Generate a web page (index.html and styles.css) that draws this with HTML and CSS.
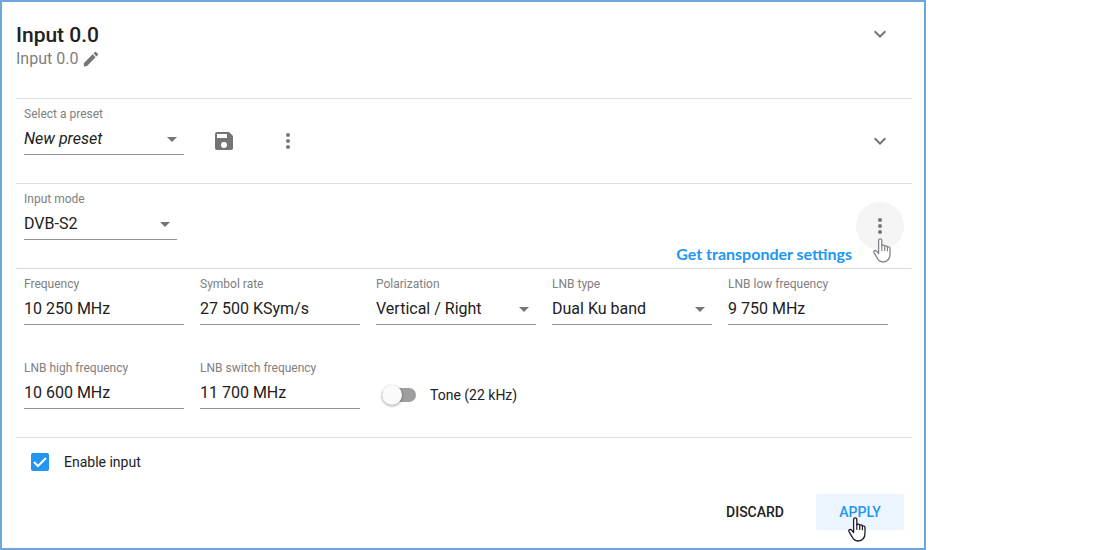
FILE: index.html
```html
<!DOCTYPE html>
<html lang="en">
<head>
    <meta charset="UTF-8">
    <title>Input 0.0</title>
    <link rel="stylesheet" href="styles.css">
</head>
<body>
<!-- shared icons -->
<svg class="sprite" aria-hidden="true">
    <symbol id="chevron" viewBox="0 0 24 24"><path d="M7.41 8.59 12 13.17l4.59-4.58L18 10l-6 6-6-6z"/></symbol>
    <symbol id="more" viewBox="0 0 24 24"><path d="M12 8a2 2 0 1 0 0-4 2 2 0 0 0 0 4zm0 2a2 2 0 1 0 0 4 2 2 0 0 0 0-4zm0 6a2 2 0 1 0 0 4 2 2 0 0 0 0-4z"/></symbol>
    <symbol id="hand" viewBox="0 0 18 25">
        <path fill="#fff" stroke="currentColor" stroke-width="1.3" stroke-linejoin="round" stroke-linecap="round" d="M5.6 15.500V2.600c0-2.400 3.200-2.400 3.200 0v5.200c.6-1 2.600-.8 2.900.5.700-.8 2.400-.5 2.700.7.900-.5 2.600 0 2.600 1.600v5.200c0 4.800-2.400 8.200-7 8.200-3.400 0-4.700-1.600-5.900-4.200L1 14.600c-.7-1.800 1.200-2.800 2.600-1.500l2 2.400"/>
        <path fill="none" stroke="currentColor" stroke-width="1.200" stroke-linecap="round" d="M8.800 7.500v5M11.700 8.300v4.200M14.400 9v3.800"/>
    </symbol>
</svg>

<form class="panel">
    <header class="head">
        <div class="titles">
            <h1>Input 0.0</h1>
            <div class="sub">
                <span>Input 0.0</span>
                <button type="button" class="edit" aria-label="Rename">
                    <svg viewBox="2 2 20 20"><path d="M3 17.250V21h3.750L17.810 9.940l-3.750-3.750L3 17.250zM20.710 7.040a1 1 0 0 0 0-1.410l-2.340-2.340a1 1 0 0 0-1.410 0l-1.830 1.830 3.750 3.750 1.830-1.830z"/></svg>
                </button>
            </div>
        </div>
        <button type="button" class="icon-btn right" aria-label="Collapse"><svg><use href="#chevron"/></svg></button>
    </header>

    <section class="row">
        <div class="field preset">
            <label for="preset">Select a preset</label>
            <div class="select"><select id="preset"><option>New preset</option></select></div>
        </div>
        <button type="button" class="icon-btn" aria-label="Save preset">
            <svg viewBox="0 0 24 24"><path d="M17 3H5a2 2 0 0 0-2 2v14a2 2 0 0 0 2 2h14c1.100 0 2-.9 2-2V7l-4-4zm-5 16a3 3 0 1 1 0-6 3 3 0 0 1 0 6zm3-10H5V5h10v4z"/></svg>
        </button>
        <button type="button" class="icon-btn" aria-label="Preset menu"><svg><use href="#more"/></svg></button>
        <button type="button" class="icon-btn right" aria-label="Expand presets"><svg><use href="#chevron"/></svg></button>
    </section>

    <section class="row">
        <div class="field mode">
            <label for="mode">Input mode</label>
            <div class="select"><select id="mode"><option>DVB-S2</option></select></div>
        </div>
        <span class="hint right">Get transponder settings</span>
        <button type="button" class="icon-btn hover" aria-label="Get transponder settings">
            <svg><use href="#more"/></svg>
            <svg class="hand"><use href="#hand"/></svg>
        </button>
    </section>

    <section class="grid">
        <div class="field">
            <label for="freq">Frequency</label>
            <input type="text" id="freq" value="10 250 MHz">
        </div>
        <div class="field">
            <label for="rate">Symbol rate</label>
            <input type="text" id="rate" value="27 500 KSym/s">
        </div>
        <div class="field">
            <label for="pol">Polarization</label>
            <div class="select"><select id="pol"><option>Vertical / Right</option></select></div>
        </div>
        <div class="field">
            <label for="lnb">LNB type</label>
            <div class="select"><select id="lnb"><option>Dual Ku band</option></select></div>
        </div>
        <div class="field">
            <label for="low">LNB low frequency</label>
            <input type="text" id="low" value="9 750 MHz">
        </div>
        <div class="field">
            <label for="high">LNB high frequency</label>
            <input type="text" id="high" value="10 600 MHz">
        </div>
        <div class="field">
            <label for="switch">LNB switch frequency</label>
            <input type="text" id="switch" value="11 700 MHz">
        </div>
        <div class="tone">
            <input type="checkbox" class="toggle" id="tone">
            <label for="tone">Tone (22 kHz)</label>
        </div>
    </section>

    <footer class="foot">
        <div class="enable">
            <span class="check">
                <input type="checkbox" id="enable" checked>
                <svg viewBox="0 0 18 18"><path d="M3 9l4 4 8-8"/></svg>
            </span>
            <label for="enable">Enable input</label>
        </div>
        <div class="actions">
            <button type="reset" class="btn">DISCARD</button>
            <button type="submit" class="btn apply">APPLY<svg class="hand"><use href="#hand"/></svg></button>
        </div>
    </footer>
</form>
</body>
</html>
```
FILE: styles.css
```css
* {
    box-sizing: border-box;
    margin: 0;
    padding: 0;
}

body {
    background: #fff;
    color: #212121;
    font-family: Roboto, "Liberation Sans", sans-serif;
    font-size: 14px;
}

button, input, select {
    border: none;
    border-radius: 0;
    background: none;
    color: inherit;
    font: inherit;
    outline: none;
}

button {
    cursor: pointer;
}

.sprite {
    position: absolute;
    width: 0;
    height: 0;
}

.panel {
    max-width: 926px;
    padding: 0 12px 18px 14px;
    border: 2px solid #6ea6e0;
}

.right {
    margin-left: auto;
}

/* header */
.head {
    display: flex;
    padding: 8px 8px 28px 0;
}

.titles {
    padding-top: 13px;
}

h1 {
    font-size: 21px;
    font-weight: 500;
    line-height: 24px;
}

.sub {
    display: flex;
    align-items: center;
    gap: 5px;
    height: 23px;
    color: #808080;
    font-size: 16px;
}

.edit, .edit svg {
    display: block;
    width: 16px;
    height: 16px;
    fill: #757575;
}

.icon-btn {
    position: relative;
    display: flex;
    flex: none;
    align-items: center;
    justify-content: center;
    width: 48px;
    height: 48px;
    border-radius: 50%;
}

.icon-btn svg {
    width: 24px;
    height: 24px;
    fill: #757575;
}

.icon-btn.hover {
    background: #f5f5f5;
}

/* sections */
.row {
    display: flex;
    gap: 16px;
    padding: 8px 8px 28px;
    border-top: 1px solid #e0e0e0;
}

.row .icon-btn {
    margin-top: 10px;
    margin-bottom: -10px;
}

.row .icon-btn.right {
    margin-left: auto;
}

.preset {
    width: 160px;
}

.mode {
    width: 153px;
}

.grid {
    display: grid;
    grid-template-columns: repeat(auto-fill, minmax(152px, 1fr));
    gap: 36px 16px;
    padding: 8px 24px 28px 8px;
    border-top: 1px solid #e0e0e0;
}

.field label {
    display: block;
    color: #808080;
    font-size: 12px;
    line-height: 14px;
}

.field input, .field select {
    display: block;
    width: 100%;
    height: 34px;
    padding-top: 2px;
    border-bottom: 1px solid #949494;
    font-size: 16px;
    appearance: none;
}

.select {
    position: relative;
}

.select:after {
    content: "";
    position: absolute;
    top: 16px;
    right: 7px;
    border: 5px solid transparent;
    border-top-color: #757575;
    border-bottom: none;
    pointer-events: none;
}

#preset {
    font-style: italic;
}

.hint {
    align-self: flex-end;
    margin-right: -12px;
    margin-bottom: -24px;
    color: #2196f3;
    font-family: Lato, "Open Sans", sans-serif;
    font-size: 16px;
    font-weight: 700;
    line-height: 20px;
}

/* mouse pointer over the buttons */
.hand, .icon-btn .hand {
    position: absolute;
    width: 18px;
    height: 25px;
    color: #1c1c2b;
    pointer-events: none;
}

.icon-btn .hand {
    top: 36px;
    left: 17px;
    color: #85858d;
}

.tone {
    display: flex;
    align-items: center;
    gap: 14px;
    height: 20px;
    margin-top: 24px;
    padding-left: 6px;
}

.toggle {
    position: relative;
    width: 34px;
    height: 14px;
    border-radius: 7px;
    background: #9e9e9e;
    appearance: none;
}

.toggle:before {
    content: "";
    position: absolute;
    top: -3px;
    left: 0;
    width: 20px;
    height: 20px;
    border-radius: 50%;
    background: #fafafa;
    box-shadow: 0 1px 3px rgba(0, 0, 0, .4);
}

.toggle:checked:before {
    left: 14px;
}

/* footer */
.foot {
    padding: 12px 8px 0;
    border-top: 1px solid #e0e0e0;
}

.enable {
    display: flex;
    align-items: center;
    gap: 15px;
    height: 24px;
    padding-left: 7px;
}

.check {
    position: relative;
    width: 18px;
    height: 18px;
}

.check input {
    display: block;
    width: 18px;
    height: 18px;
    border: 2px solid #757575;
    border-radius: 2px;
    appearance: none;
}

.check input:checked {
    border-color: #2196f3;
    background: #2196f3;
}

.check svg {
    position: absolute;
    top: 0;
    left: 0;
    width: 18px;
    height: 18px;
    fill: none;
    stroke: #fff;
    stroke-width: 2;
    pointer-events: none;
}

.actions {
    display: flex;
    justify-content: flex-end;
    gap: 16px;
    margin-top: 20px;
}

.btn {
    position: relative;
    min-width: 88px;
    height: 36px;
    padding: 0 16px;
    border-radius: 2px;
    font-weight: 500;
}

.apply {
    background: #edf6fe;
    color: #2196f3;
}

.apply .hand {
    top: 23px;
    left: 32px;
}
```
